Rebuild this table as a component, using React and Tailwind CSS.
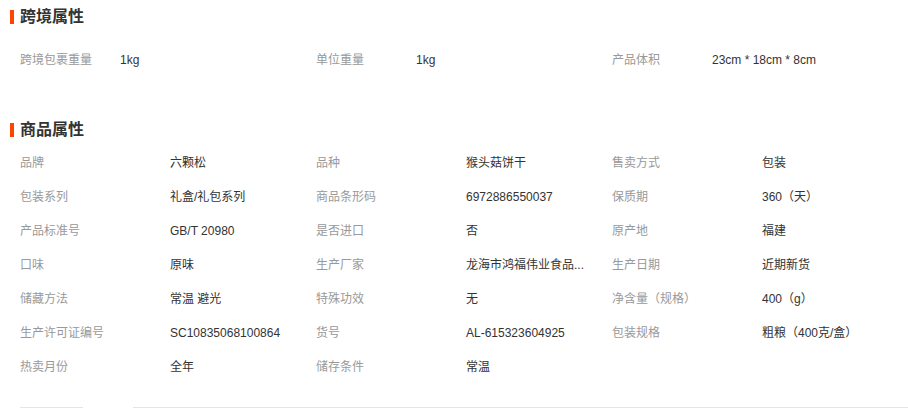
import React from 'react';

const crossBorder = [
	{ label: '跨境包裹重量', value: '1kg' },
	{ label: '单位重量', value: '1kg' },
	{ label: '产品体积', value: '23cm * 18cm * 8cm' },
];

const productAttrs = [
	{ label: '品牌', value: '六颗松' },
	{ label: '品种', value: '猴头菇饼干' },
	{ label: '售卖方式', value: '包装' },
	{ label: '包装系列', value: '礼盒/礼包系列' },
	{ label: '商品条形码', value: '6972886550037' },
	{ label: '保质期', value: '360（天）' },
	{ label: '产品标准号', value: 'GB/T 20980' },
	{ label: '是否进口', value: '否' },
	{ label: '原产地', value: '福建' },
	{ label: '口味', value: '原味' },
	{ label: '生产厂家', value: '龙海市鸿福伟业食品...' },
	{ label: '生产日期', value: '近期新货' },
	{ label: '储藏方法', value: '常温 避光' },
	{ label: '特殊功效', value: '无' },
	{ label: '净含量（规格）', value: '400（g）' },
	{ label: '生产许可证编号', value: 'SC10835068100864' },
	{ label: '货号', value: 'AL-615323604925' },
	{ label: '包装规格', value: '粗粮（400克/盒）' },
	{ label: '热卖月份', value: '全年' },
	{ label: '储存条件', value: '常温' },
];

function SectionTitle({ title }) {
	return (
		<div className="flex items-center h-[20px] pl-[10px]">
			<span className="w-[4px] h-[14px] bg-[#ff4400] mr-[6px]"></span>
			<span className="text-[16px] leading-[20px] font-bold text-[#333]">{title}</span>
		</div>
	);
}

function AttrGrid({ items, labelWidth }) {
	return (
		<div className="grid grid-cols-3 pl-[20px]">
			{items.map((item, i) => (
				<div key={i} className="flex h-[34px] items-center text-[12px] min-w-0">
					<div className={'shrink-0 text-[#999] ' + labelWidth}>{item.label}</div>
					<div className="flex-1 min-w-0 pr-[4px] text-[#333] whitespace-nowrap">{item.value}</div>
				</div>
			))}
		</div>
	);
}

export default function App() {
	return (
		<div
			className="w-[908px] h-[408px] bg-white overflow-hidden pt-[7px]"
			style={{ fontFamily: '"Liberation Sans", "Noto Sans CJK SC", sans-serif' }}
		>
			<SectionTitle title="跨境属性" />
			<div className="mt-[16px]">
				<AttrGrid items={crossBorder} labelWidth="w-[100px]" />
			</div>
			<div className="mt-[43px]">
				<SectionTitle title="商品属性" />
			</div>
			<div className="mt-[6px]">
				<AttrGrid items={productAttrs} labelWidth="w-[150px]" />
			</div>
			<div className="flex mt-[23px] pl-[20px]">
				<div className="w-[63px] border-t border-[#e5e5e5]"></div>
				<div className="flex-1 ml-[50px] border-t border-[#e5e5e5]"></div>
			</div>
		</div>
	);
}
